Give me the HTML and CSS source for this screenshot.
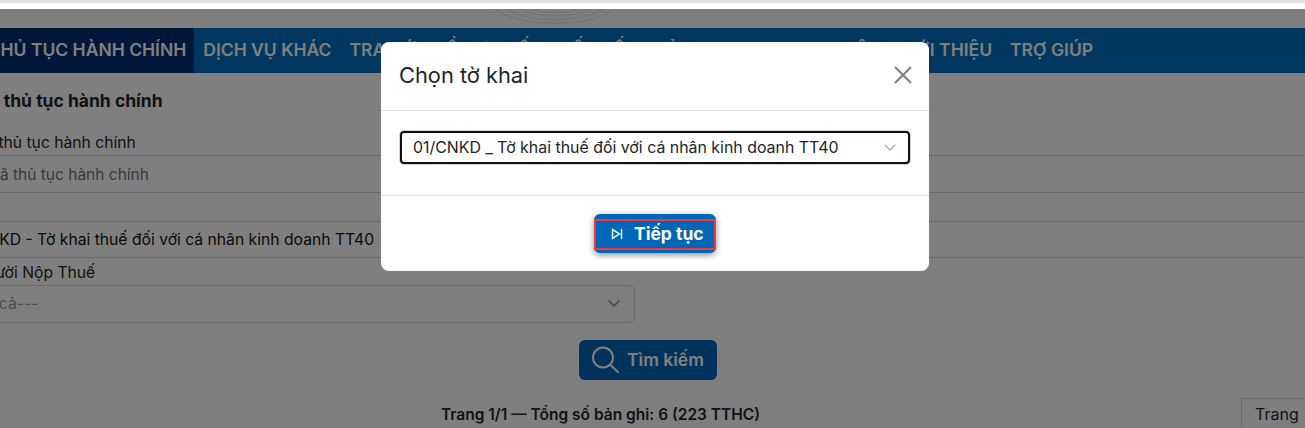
FILE: index.html
```html
<!DOCTYPE html>
<html lang="vi">
<head>
<meta charset="utf-8">
<title>Chọn tờ khai</title>
<link rel="stylesheet" href="styles.css">
</head>
<body>
<div class="strip"></div>
<div class="page">
  <header class="brand">
    <svg class="arcs" width="120" height="19" viewBox="0 0 120 19" fill="none" stroke="#ececec" stroke-width="1.5">
      <path d="M0 0C25 19 95 19 120 0"/>
      <path d="M12 0C35 14 85 14 108 0"/>
      <path d="M25 0C42 9 78 9 95 0"/>
      <path d="M38 0C50 5 70 5 82 0"/>
    </svg>
  </header>
  <nav class="nav">
    <a class="nav-item active">THỦ TỤC HÀNH CHÍNH</a>
    <a class="nav-item">DỊCH VỤ KHÁC</a>
    <a class="nav-item">TRA CỨU HỒ SƠ</a>
    <a class="nav-item">TỐ THUẾ</a>
    <a class="nav-item">KẾT QUẢ</a>
    <a class="nav-item">THANH TRA CHUYÊN</a>
    <a class="nav-item">GIỚI THIỆU</a>
    <a class="nav-item">TRỢ GIÚP</a>
  </nav>
  <main class="content">
    <h2 class="title">Tra cứu thủ tục hành chính</h2>
    <label class="label">Mã thủ tục hành chính</label>
    <div class="field wide placeholder">Nhập mã thủ tục hành chính</div>
    <div class="field wide value second">01/CNKD - Tờ khai thuế đối với cá nhân kinh doanh TT40</div>
    <label class="label third">Người Nộp Thuế</label>
    <div class="field narrow muted">
      <span>---Tất cả---</span>
      <svg class="chev" width="12" height="7" viewBox="0 0 12 7" fill="none" stroke="#999" stroke-width="1.800"><path d="M.7.700L6 6l5.300-5.300"/></svg>
    </div>
    <div class="actions">
      <button class="search">
        <svg width="30" height="32" viewBox="0 0 30 32" fill="none" stroke="#fff" stroke-width="2"><circle cx="11" cy="14.500" r="10"/><path d="M18.500 22l7.500 7" stroke-linecap="round"/></svg>
        Tìm kiếm
      </button>
    </div>
    <div class="summary">
      <span class="total">Trang 1/1 — Tổng số bản ghi: 6 (223 TTHC)</span>
      <span class="pager">Trang</span>
    </div>
  </main>

  <div class="backdrop"></div>
  <section class="modal">
    <div class="modal-head">
      <h3 class="modal-title">Chọn tờ khai</h3>
      <svg class="close" width="18" height="18" viewBox="0 0 18 18" stroke="#7c7c7c" stroke-width="2" fill="none"><path d="M1 1l16 16M17 1L1 17"/></svg>
    </div>
    <div class="modal-body">
      <div class="modal-select">
        <span>01/CNKD _ Tờ khai thuế đối với cá nhân kinh doanh TT40</span>
        <svg width="12" height="7" viewBox="0 0 12 7" fill="none" stroke="#adb0b4" stroke-width="1.500"><path d="M.7.700L6 6l5.300-5.300"/></svg>
      </div>
    </div>
    <div class="modal-foot">
      <button class="next">
        <span class="next-inner">
          <svg width="12" height="12" viewBox="0 0 12 12" fill="none" stroke="#e6f0fa" stroke-width="1.500"><path d="M1.500 1.500L8.500 6l-7 4.500z"/><path d="M10.500 1v10"/></svg>
          Tiếp tục
        </span>
      </button>
    </div>
  </section>
</div>
</body>
</html>
```
FILE: styles.css
```css
* { box-sizing: border-box; }
html, body { margin: 0; height: 428px; overflow: hidden; background: #fff; }
body { font-family: Inter, "Noto Sans", sans-serif; color: #212529; }

.strip { height: 3px; background: #e0e0e0; margin-bottom: 6px; }

.page { position: relative; height: 419px; overflow: hidden; background: #fff; }

.brand { height: 19px; display: flex; padding-left: 495px; }
.arcs { display: block; }

.nav { display: flex; height: 45px; background: #006ec0; margin-left: -20px; width: 1340px; }
.nav-item { padding: 0 9px; line-height: 43px; font-size: 17.5px; font-weight: 600; color: #fff; white-space: nowrap; }
.nav-item.active { background: #002e74; padding-right: 8px; }

.content { margin-left: -70px; width: 1400px; }
.title { margin: 0; padding: 18px 0 0 5px; font-size: 17.5px; line-height: 20px; font-weight: 700; color: #212529; }
.label { display: block; font-size: 15.7px; line-height: 20px; margin-top: 22px; padding-left: 41px; }
.field { display: flex; align-items: center; font-size: 15.7px; border: 1px solid #ced4da; }
.wide { height: 38px; padding: 0 12px; margin-top: 2px; }
.placeholder { color: #6c757d; font-size: 15.5px; }
.value { color: #111; }
.second { margin-top: 28px; height: 37px; padding-left: 23px; }
.third { margin-top: 5px; padding-left: 44px; }
.narrow { height: 38px; width: 705px; margin-top: 2px; padding: 0 14px 1px 20px; justify-content: space-between; border-radius: 6px; color: #999; }

.actions { display: flex; justify-content: center; padding: 17px 0 0 0; width: 1436px; }
.search { display: flex; align-items: center; gap: 5px; width: 138px; height: 40px; padding: 0 13px 2px; border: 0; border-radius: 6px; background: #0067b8; color: #fff; font: 600 17.5px Inter, sans-serif; white-space: nowrap; }

.summary { position: relative; display: flex; justify-content: center; width: 1341px; padding-top: 25px; }
.total { font-size: 15.5px; line-height: 20px; font-weight: 600; white-space: nowrap; }
.pager { position: absolute; left: 1311px; top: 18px; height: 40px; padding: 0 13px; line-height: 30px; border: 1px solid #ced4da; font-size: 16px; width: 100px; }

.backdrop { position: absolute; inset: 0; background: rgba(0, 0, 0, .5); }

.modal { position: absolute; left: 381px; top: 33px; width: 548px; height: 229px; background: #fff; border-radius: 8px; display: flex; flex-direction: column; }
.modal-head { height: 69px; display: flex; align-items: center; justify-content: space-between; padding: 0 17px 2px 18px; border-bottom: 1px solid #dee2e6; }
.modal-title { margin: 0; font-size: 21.8px; font-weight: 400; color: #212529; }
.modal-body { height: 85px; padding: 20px 19px 0 19px; border-bottom: 1px solid #dee2e6; }
.modal-select { display: flex; align-items: center; justify-content: space-between; height: 33px; padding: 0 12px 1px 11px; border: 2px solid #111; border-radius: 4px; box-shadow: 0 0 0 1px #ced4da; font-size: 15.9px; color: #212529; }
.modal-foot { flex: 1; display: flex; justify-content: center; padding-top: 18px; }
.next { width: 122px; height: 39px; padding: 5px 0 3px; border: 0; border-radius: 6px; background: #0067b8; box-shadow: 0 2px 6px rgba(0, 0, 0, .45); font: 700 17.5px Inter, sans-serif; color: #fff; }
.next-inner { display: flex; align-items: center; gap: 11px; height: 31px; padding: 0 0 2px 15px; border: 2px solid #f0393e; }
```
